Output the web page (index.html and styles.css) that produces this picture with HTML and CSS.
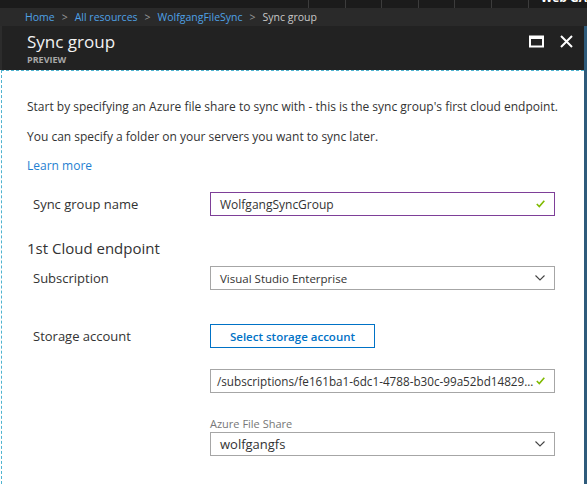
FILE: index.html
```html
<!DOCTYPE html>
<html lang="en">
<head>
    <meta charset="UTF-8">
    <title>Sync group</title>
    <link rel="stylesheet" href="styles.css">
</head>
<body>
    <!-- Top strip -->
    <div class="top-strip">
        <span class="tile"></span>
        <span class="tile"></span>
        <span class="tile"></span>
        <span class="tile"></span>
        <span class="tile"></span>
        <span class="tile"></span>
        <span class="account">Web GA</span>
    </div>

    <!-- Breadcrumb -->
    <div class="breadcrumb">
        <a href="#">Home</a>
        <span class="sep">&gt;</span>
        <a href="#">All resources</a>
        <span class="sep">&gt;</span>
        <a href="#">WolfgangFileSync</a>
        <span class="sep">&gt;</span>
        <span class="current">Sync group</span>
    </div>

    <div class="blade">
        <!-- Blade header -->
        <div class="blade-header">
            <div class="blade-title">
                <h1>Sync group</h1>
                <span class="badge">PREVIEW</span>
            </div>
            <div class="blade-actions">
                <svg width="15" height="13" viewBox="0 0 15 13">
                    <rect x="1" y="1.5" width="13" height="10" fill="none" stroke="#fff" stroke-width="2"/>
                    <rect x="1" y="1" width="13" height="3" fill="#fff"/>
                </svg>
                <svg width="13" height="13" viewBox="0 0 13 13">
                    <path d="M1 1 L12 12 M12 1 L1 12" stroke="#fff" stroke-width="2"/>
                </svg>
            </div>
        </div>

        <!-- Blade content -->
        <div class="blade-content">
            <p class="intro">Start by specifying an Azure file share to sync with - this is the sync group's first cloud endpoint.</p>
            <p class="intro">You can specify a folder on your servers you want to sync later.</p>
            <a class="learn" href="#">Learn more</a>

            <div class="form-row first">
                <label class="row-label">Sync group name</label>
                <div class="field active">
                    <span class="value">WolfgangSyncGroup</span>
                    <svg class="check" width="9" height="8" viewBox="0 0 9 8"><path d="M0.8 4 L3.3 6.6 L8.3 0.8" fill="none" stroke="#7fba00" stroke-width="1.6"/></svg>
                </div>
            </div>

            <h2 class="section">1st Cloud endpoint</h2>

            <div class="form-row">
                <label class="row-label">Subscription</label>
                <div class="field">
                    <span class="value">Visual Studio Enterprise</span>
                    <svg class="chevron" width="10" height="6" viewBox="0 0 10 6"><path d="M0.5 0.5 L5 5 L9.5 0.5" fill="none" stroke="#444" stroke-width="1.1"/></svg>
                </div>
            </div>

            <div class="form-row storage">
                <label class="row-label">Storage account</label>
                <div class="stack">
                    <button class="btn-outline">Select storage account</button>
                    <div class="field small">
                        <span class="value">/subscriptions/fe161ba1-6dc1-4788-b30c-99a52bd14829...</span>
                        <svg class="check" width="9" height="8" viewBox="0 0 9 8"><path d="M0.8 4 L3.3 6.6 L8.3 0.8" fill="none" stroke="#7fba00" stroke-width="1.6"/></svg>
                    </div>
                    <div class="sub-label">Azure File Share</div>
                    <div class="field large">
                        <span class="value">wolfgangfs</span>
                        <svg class="chevron" width="10" height="6" viewBox="0 0 10 6"><path d="M0.5 0.5 L5 5 L9.5 0.5" fill="none" stroke="#444" stroke-width="1.1"/></svg>
                    </div>
                </div>
            </div>
        </div>
    </div>
</body>
</html>
```

FILE: styles.css
```css
:root {
    --link-blue: #0072c6;
    --crumb-blue: #4ea1e6;
    --purple: #7e3f98;
    --border-gray: #a6a6a6;
}

* {
    box-sizing: border-box;
}

body {
    margin: 0;
    height: 484px;
    overflow: hidden;
    font-family: 'Open Sans', 'Noto Sans', sans-serif;
    background: #fff;
    color: #333;
    display: flex;
    flex-direction: column;
}

/* Top strip */
.top-strip {
    height: 8px;
    background: #1b1b1b;
    display: flex;
    justify-content: flex-end;
    overflow: hidden;
    padding-left: 308px;
}

.tile {
    width: 41px;
    border-left: 1px solid #3c3c3c;
}

.account {
    flex: 1;
    border-left: 1px solid #3c3c3c;
    color: #fff;
    font-weight: 700;
    font-size: 12px;
    line-height: 1;
    margin-top: -8px;
    padding-left: 12px;
    white-space: nowrap;
}

/* Breadcrumb */
.breadcrumb {
    height: 18px;
    background: #2a2a2a;
    padding-left: 25px;
    font-size: 10.5px;
    line-height: 19px;
    display: flex;
    gap: 7px;
}

.breadcrumb a {
    color: var(--crumb-blue);
    text-decoration: none;
}

.breadcrumb .sep {
    color: #9a9a9a;
}

.breadcrumb .current {
    color: #c8c8c8;
}

/* Blade */
.blade {
    flex: 1;
    display: flex;
    flex-direction: column;
    border-right: 3px solid #2e5b7b;
}

.blade-header {
    height: 44px;
    background: #222;
    border-left: 2px solid #2c2c2c;
    display: flex;
    justify-content: space-between;
    align-items: flex-start;
    padding: 0 11px 0 25px;
}

.blade-title h1 {
    margin: 4px 0 0;
    font-size: 17px;
    font-weight: 400;
    color: #f2f2f2;
    line-height: 23px;
}

.badge {
    display: block;
    margin-top: 1px;
    font-size: 9px;
    font-weight: 700;
    color: #a8a8a8;
    line-height: 11px;
}

.blade-actions {
    display: flex;
    gap: 16px;
    margin-top: 9px;
}

/* Content */
.blade-content {
    flex: 1;
    margin-left: 1px;
    border-top: 1px dashed #4fb3cf;
    border-left: 1px dashed #4fb3cf;
    padding: 28px 20px 0 25px;
    display: flex;
    flex-direction: column;
    align-items: flex-start;
}

.intro {
    margin: 0 0 14px;
    font-size: 12px;
    line-height: 16px;
    color: #333;
}

.learn {
    font-size: 12px;
    line-height: 16px;
    color: #1f7fd1;
    text-decoration: none;
    margin-top: -1px;
}

.form-row {
    display: flex;
    align-items: center;
    width: 100%;
}

.form-row.first {
    margin-top: 18px;
}

.row-label {
    width: 183px;
    padding-left: 6px;
    font-size: 13px;
    color: #333;
}

.field {
    width: 345px;
    height: 24px;
    border: 1px solid var(--border-gray);
    display: flex;
    align-items: center;
    justify-content: space-between;
    padding: 0 9px 0 9px;
    font-size: 11.5px;
    color: #333;
}

.field.active {
    border-color: var(--purple);
    font-size: 12px;
}

.field.small {
    font-size: 11.7px;
    padding-left: 6px;
}

.field.large {
    font-size: 13px;
}

.value {
    white-space: nowrap;
}

.section {
    margin: 22px 0 8px;
    font-size: 15px;
    font-weight: 400;
    color: #333;
    line-height: 20px;
}

/* Storage account */
.form-row.storage {
    align-items: flex-start;
    margin-top: 34px;
}

.form-row.storage .row-label {
    margin-top: 3px;
}

.stack {
    display: flex;
    flex-direction: column;
    align-items: flex-start;
}

.btn-outline {
    width: 165px;
    height: 24px;
    border: 1px solid var(--link-blue);
    background: #fff;
    color: var(--link-blue);
    font-family: inherit;
    font-size: 11.5px;
    font-weight: 600;
    margin-bottom: 21px;
}

.sub-label {
    margin: 23px 0 1px;
    font-size: 11px;
    color: #777;
    line-height: 15px;
}
```
